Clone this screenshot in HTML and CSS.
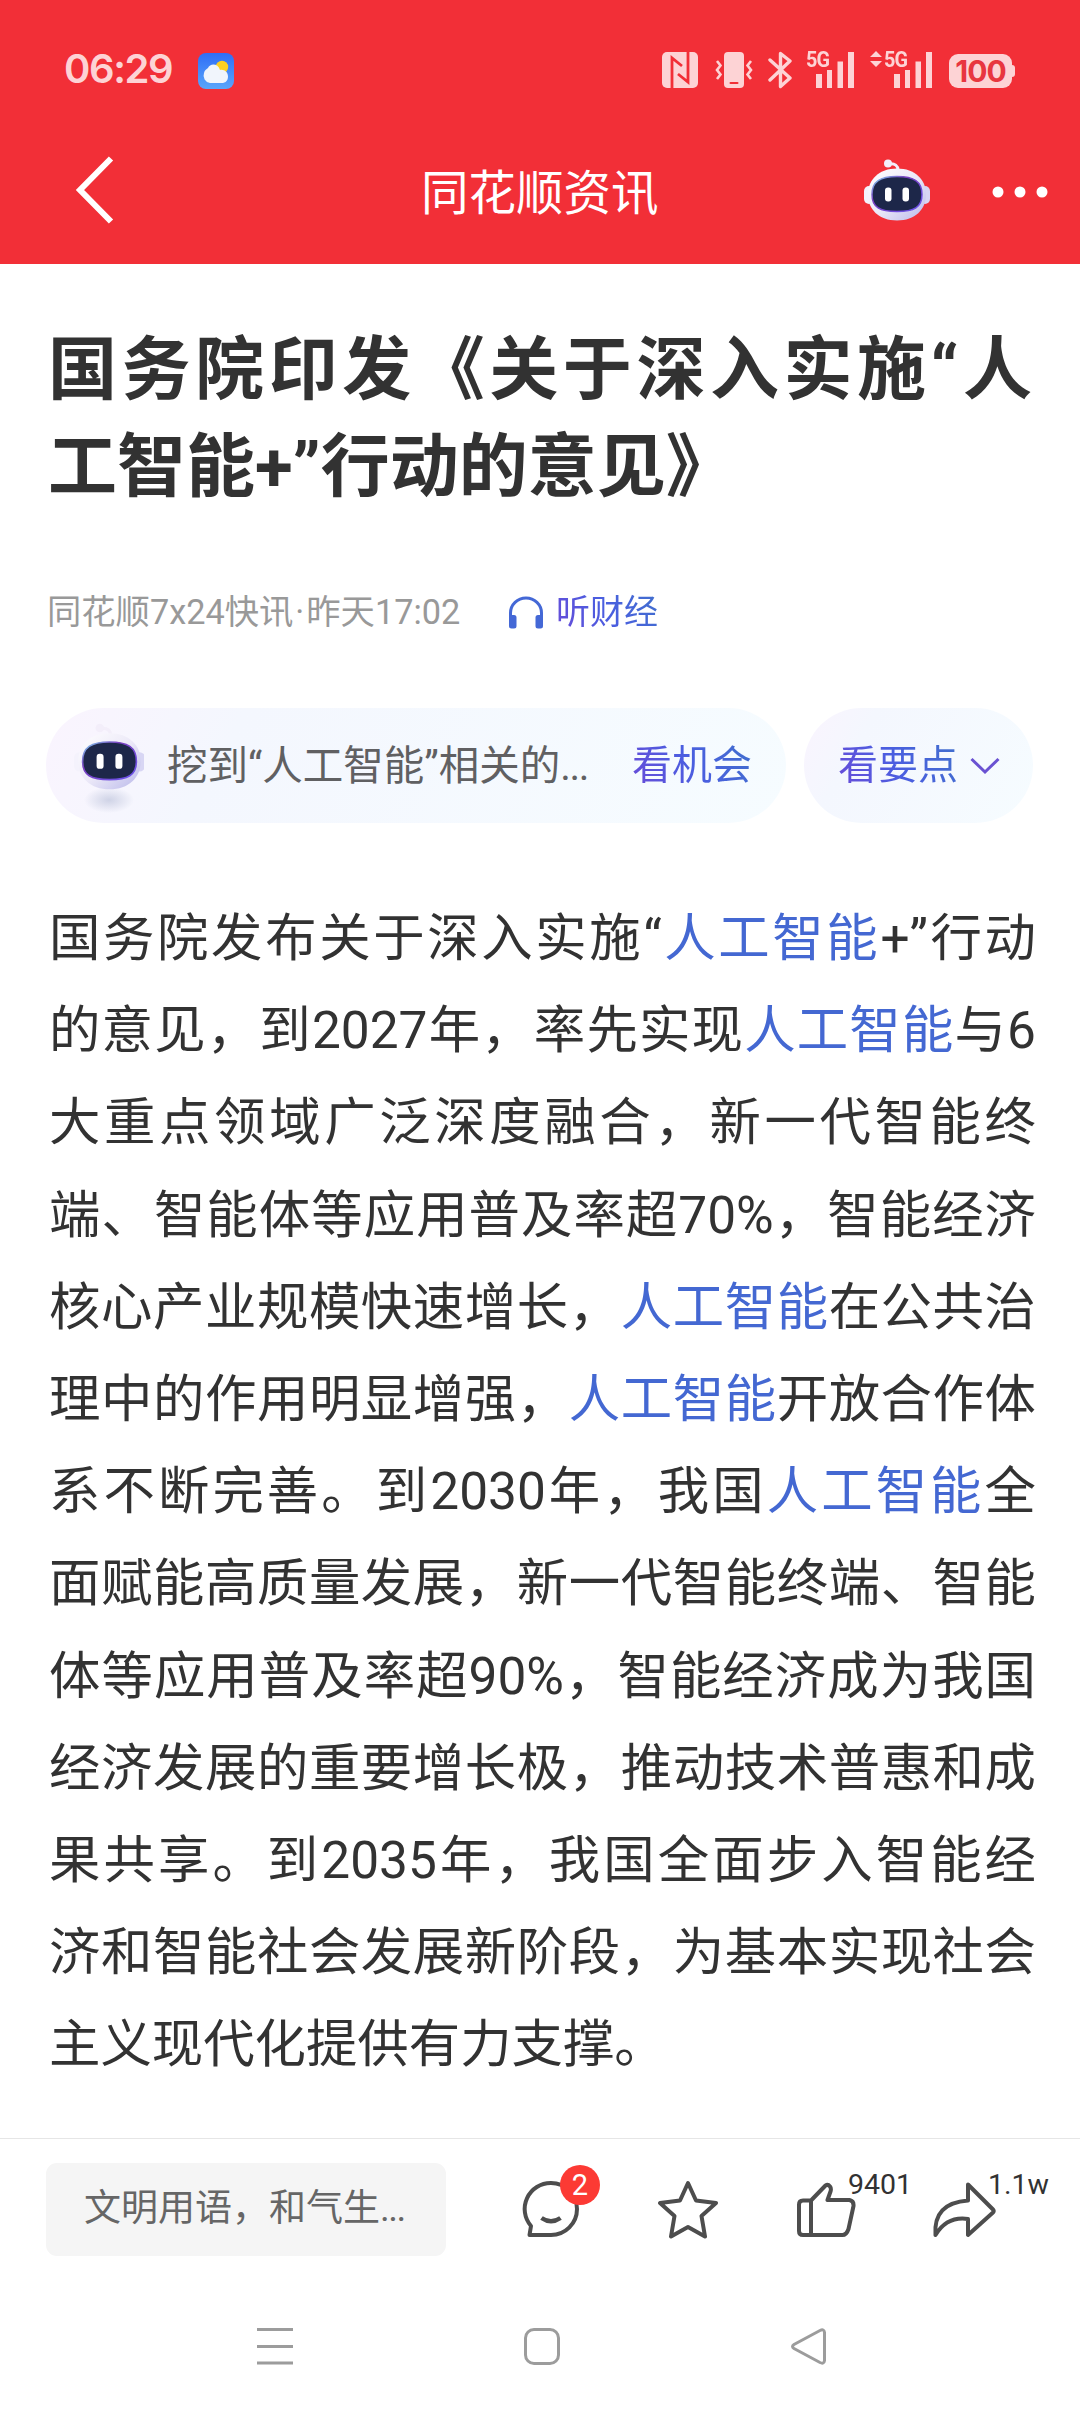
FILE: index.html
```html
<!DOCTYPE html>
<html lang="zh-CN">
<head>
  <meta charset="UTF-8" />
  <meta name="viewport" content="width=device-width, initial-scale=1" />
  <title>同花顺资讯</title>
  <link rel="stylesheet" href="styles.css">
</head>
<body>
  <!-- shared drawings -->
  <svg class="defs" width="0" height="0">
    <defs>
      <linearGradient id="shell" x1="0" y1="0" x2="1" y2="1">
        <stop offset="0" stop-color="#ffffff" />
        <stop offset="0.5" stop-color="#ece9f8" />
        <stop offset="1" stop-color="#b9b8ea" />
      </linearGradient>
      <linearGradient id="rim" x1="0" y1="0" x2="1" y2="1">
        <stop offset="0" stop-color="#7fd6f0" />
        <stop offset="0.35" stop-color="#7a3fc0" />
        <stop offset="1" stop-color="#6a55ee" />
      </linearGradient>
      <linearGradient id="sky" x1="0" y1="0" x2="0" y2="1">
        <stop offset="0" stop-color="#2f6df6" />
        <stop offset="1" stop-color="#5aa6fb" />
      </linearGradient>
      <radialGradient id="shade">
        <stop offset="0" stop-color="#cfd3e6" />
        <stop offset="1" stop-color="#cfd3e6" stop-opacity="0" />
      </radialGradient>
      <symbol id="robot" viewBox="0 0 66 62">
        <path d="M25 5c6-1 9 2 9 6" fill="none" stroke="#f3eefa" stroke-width="3" />
        <circle cx="24" cy="4.500" r="4" fill="#f3eefa" />
        <rect x="0" y="27" width="10" height="18" rx="5" fill="#f4f2fc" />
        <rect x="56" y="27" width="10" height="18" rx="5" fill="#d8d6f4" />
        <path d="M33 9.500c18 0 29 11 29 26S51 61.500 33 61.500 4 50.500 4 35.500s11-26 29-26z" fill="url(#shell)" />
        <path d="M33 17.500c17 0 25 5 25 18s-8 17-25 17-25-4-25-17 8-18 25-18z" fill="#1d2749" stroke="url(#rim)" stroke-width="1.500" />
        <rect x="21" y="28.500" width="6.500" height="14" rx="3" fill="#fff" />
        <rect x="38.500" y="28.500" width="6.500" height="14" rx="3" fill="#fff" />
      </symbol>
      <symbol id="bars" viewBox="0 0 38 36">
        <path d="M0 22h6v14H0zM11 18h5v18h-5zM21.500 9.500h5.500V36h-5.500zM32 0h6v36h-6z" />
      </symbol>
    </defs>
  </svg>

  <header>
    <div class="status-bar">
      <span class="clock">06:29</span>
      <svg class="weather" width="36" height="36" viewBox="0 0 36 36">
        <rect width="36" height="36" rx="8" fill="url(#sky)" />
        <circle cx="24" cy="14" r="6.200" fill="#fcd022" />
        <path d="M12 30a7.500 7.500 0 0 1-6-10c.5-3 3-4 4-5 2-5 10-5 12 2 4-1 8 2 8 6.500s-3 6.500-6 6.500z" fill="#f1f5fc" />
      </svg>
      <div class="status-icons">
        <svg class="nfc" width="36" height="36" viewBox="0 0 36 36">
          <rect width="36" height="36" rx="5" />
          <path d="M10 36V6l10 8M26 0v30L16 22" fill="none" stroke="#f22f37" stroke-width="2.800" />
        </svg>
        <svg class="vibrate" width="38" height="36" viewBox="0 0 38 36">
          <rect x="9" width="20" height="36" rx="4" />
          <path d="M15.500 31h7" stroke="#f22f37" stroke-width="2" stroke-linecap="round" />
          <path d="M2 9l3.500 4.500L2 18l3.500 4.500L2 27M36 9l-3.500 4.500L36 18l-3.500 4.500L36 27" fill="none" stroke="#fdd3d5" stroke-width="2.600" />
        </svg>
        <svg class="bluetooth" width="24" height="38" viewBox="0 0 24 38">
          <path d="M2 9l20 18-9.500 8.500v-33L22 10 2 29" fill="none" stroke="#fdd3d5" stroke-width="3.400" stroke-linejoin="round" stroke-linecap="round" />
        </svg>
        <div class="signal">
          <span class="net">5G</span>
          <svg width="38" height="36"><use href="#bars" /></svg>
        </div>
        <svg class="updown" width="12" height="16" viewBox="0 0 12 16"><path d="M6 0l6 6H0zM6 16l6-6H0z" /></svg>
        <div class="signal second">
          <span class="net">5G</span>
          <svg width="38" height="36"><use href="#bars" /></svg>
        </div>
        <div class="battery">100</div>
      </div>
    </div>
    <div class="nav-bar">
      <svg class="back" width="40" height="68" viewBox="0 0 40 68"><path d="M36 2.500L5 34l31 31.500" fill="none" stroke="#fff" stroke-width="6" /></svg>
      <h2>同花顺资讯</h2>
      <svg class="robot" width="66" height="62"><use href="#robot" /></svg>
      <svg class="more" width="56" height="12" viewBox="0 0 56 12"><circle cx="6" cy="6" r="5.500" /><circle cx="28" cy="6" r="5.500" /><circle cx="50" cy="6" r="5.500" /></svg>
    </div>
  </header>

  <main>
    <h1>
      <span class="full">国务院印发《关于深入实施“人</span>
      <span>工智能+”行动的意见》</span>
    </h1>

    <div class="meta">
      <span class="source">同花顺7x24快讯<i class="dot">·</i>昨天17:02</span>
      <svg width="36" height="33" viewBox="0 0 36 33">
        <path d="M2.500 24v-7a15.500 15 0 0 1 31 0v7" fill="none" stroke="#4468d6" stroke-width="3" />
        <path d="M1 19h5q2.500 0 2.500 2.500V30q0 2.500-2.500 2.500H3.500Q1 32.500 1 30zM35 19h-5q-2.500 0-2.500 2.500V30q0 2.500 2.500 2.500h2.500q2.500 0 2.500-2.500z" fill="#4468d6" />
      </svg>
      <span class="listen">听财经</span>
    </div>

    <div class="ai-row">
      <div class="pill chance">
        <svg class="bot" width="70" height="96" viewBox="0 0 70 96">
          <ellipse cx="35" cy="82" rx="25" ry="13" fill="url(#shade)" />
          <use href="#robot" x="0" y="5" width="71" height="67" />
        </svg>
        <span class="hint">挖到“人工智能”相关的<i class="ell">...</i></span>
        <span class="link">看机会</span>
      </div>
      <div class="pill points">
        <span class="link">看要点</span>
        <svg width="30" height="18" viewBox="0 0 30 18"><path d="M1.500 2L15 15 28.500 2" fill="none" stroke="#6a52d2" stroke-width="3" /></svg>
      </div>
    </div>

    <article>
      <span class="full">国务院发布关于深入实施“<a>人工智能</a>+”行动</span>
      <span class="full">的意见，到2027年，率先实现<a>人工智能</a>与6</span>
      <span class="full">大重点领域广泛深度融合，新一代智能终</span>
      <span class="full">端、智能体等应用普及率超70%，智能经济</span>
      <span class="full">核心产业规模快速增长，<a>人工智能</a>在公共治</span>
      <span class="full">理中的作用明显增强，<a>人工智能</a>开放合作体</span>
      <span class="full">系不断完善。到2030年，我国<a>人工智能</a>全</span>
      <span class="full">面赋能高质量发展，新一代智能终端、智能</span>
      <span class="full">体等应用普及率超90%，智能经济成为我国</span>
      <span class="full">经济发展的重要增长极，推动技术普惠和成</span>
      <span class="full">果共享。到2035年，我国全面步入智能经</span>
      <span class="full">济和智能社会发展新阶段，为基本实现社会</span>
      <span>主义现代化提供有力支撑。</span>
    </article>
  </main>

  <footer>
    <div class="actions">
      <div class="comment-input">文明用语，和气生<i class="ell">...</i></div>
      <div class="action comment">
        <svg width="60" height="60" viewBox="0 0 60 60">
          <path d="M30 4a26 26 0 0 1 0 52H8.500l1.500-9A26 26 0 0 1 30 4z" />
          <path d="M20.500 39q9.500 6.500 19 0" stroke-width="4.500" />
        </svg>
        <span class="badge">2</span>
      </div>
      <div class="action star">
        <svg width="60" height="60" viewBox="0 0 60 60"><path d="M30 4l8 17.500 20 2.500-14.500 13L47 57.500 30 48 13 57.500 16.500 37 2 24l20-2.500z" /></svg>
      </div>
      <div class="action like">
        <svg width="60" height="60" viewBox="0 0 60 60">
          <path d="M15 21.500L29.500 6.500Q32 5 34 7.500q1.500 2 .5 5l-3 8.500h22q4.500 1 4 6l-5 23q-2 6-6 6H7q-4 0-4-4V25.500q0-4 4-4z" />
          <path d="M15 21.500V56" />
        </svg>
        <span class="count">9401</span>
      </div>
      <div class="action share">
        <svg width="64" height="60" viewBox="0 0 64 60"><path d="M36 5.500l25 25q1.500 1.500 0 3L36 56V40Q15 37 3.500 56 1 24 36 21.500z" /></svg>
        <span class="count">1.1w</span>
      </div>
    </div>
    <div class="sys-nav">
      <svg width="36" height="37" viewBox="0 0 36 37"><path d="M0 1.500h36M0 18.500h36M0 35h36" /></svg>
      <svg width="36" height="37" viewBox="0 0 36 37"><rect x="1.500" y="1.500" width="33" height="34" rx="8.500" /></svg>
      <svg width="36" height="37" viewBox="0 0 36 37"><path d="M29 2.500q4-2 4.500 2v28q-.5 4-4.500 2L3 20.500q-3-2 0-4z" /></svg>
    </div>
  </footer>
</body>
</html>
```

FILE: styles.css
```css
* {
  box-sizing: border-box;
}
body {
  font-family: Roboto, "Noto Sans CJK SC", sans-serif;
  margin: 0;
  background: #fff;
  color: #323232;
  display: flex;
  flex-direction: column;
  height: 2412px;
  text-spacing-trim: space-all;
}
svg {
  display: block;
  flex-shrink: 0;
}
i {
  font-style: normal;
}
.defs {
  position: absolute;
}
header {
  height: 264px;
  background: #f22f37;
  color: #fff;
}

/* status bar */
.status-bar {
  display: flex;
  align-items: center;
  height: 120px;
  padding: 21px 65px 0 64px;
}
.clock {
  font-family: Inter, sans-serif;
  font-size: 40px;
  font-weight: 600;
  line-height: 36px;
  letter-spacing: -1.400px;
  width: 134px;
  margin-top: -4px;
  color: #fdd3d5;
}
.status-icons {
  display: flex;
  align-items: center;
  margin: -2px 0 0 auto;
  fill: #fdd3d5;
}
.vibrate {
  margin-left: 17px;
}
.bluetooth {
  margin-left: 15px;
}
.signal {
  position: relative;
  margin-left: 24px;
}
.net {
  position: absolute;
  left: -10px;
  top: -2px;
  font-size: 22px;
  font-weight: 700;
  line-height: 20px;
  letter-spacing: -1px;
  transform: scaleX(0.9);
  transform-origin: left;
  color: #fdd3d5;
}
.updown {
  margin: -22px 0 0 16px;
}
.signal.second {
  margin-left: 12px;
}
.battery {
  position: relative;
  width: 63px;
  height: 34px;
  margin: 2px 3px 0 17px;
  border-radius: 9px;
  background: #fdd3d5;
  color: #e8363f;
  font-family: Inter, sans-serif;
  font-size: 30px;
  font-weight: 700;
  line-height: 34px;
  letter-spacing: -1px;
  text-align: center;
}
.battery::after {
  content: "";
  position: absolute;
  right: -3px;
  top: 11px;
  width: 4px;
  height: 12px;
  border-radius: 0 3px 3px 0;
  background: #fdd3d5;
}

/* title bar */
.nav-bar {
  display: flex;
  align-items: center;
  height: 140px;
  padding: 0 32px 0 75px;
}
.back {
  margin-top: -1px;
}
.nav-bar h2 {
  width: 238px;
  margin: 7px 0 0 306px;
  font-size: 47.500px;
  font-weight: 400;
  line-height: 60px;
  white-space: nowrap;
}
.nav-bar .robot {
  margin-left: 205px;
}
.more {
  margin: 4px 0 0 62px;
  fill: #fff;
}

/* article */
main {
  flex: 1;
  padding: 59px 44px 0 48px;
}
h1 {
  margin: 0;
  width: 984px;
  font-size: 69px;
  font-weight: 700;
  line-height: 96.500px;
}
h1 span,
article span {
  display: block;
  white-space: nowrap;
}
.full {
  text-align: justify;
  text-align-last: justify;
}
.meta {
  display: flex;
  align-items: center;
  height: 50px;
  margin-top: 71px;
  font-size: 34.300px;
  line-height: 50px;
}
.source {
  width: 461px;
  margin-left: -1px;
  color: #999;
}
.dot {
  margin: 0 2px;
}
.listen {
  margin-left: 12px;
  font-size: 34px;
}
.listen,
.link {
  background: linear-gradient(60deg, #6a4bd8, #4a5ee0 50%, #4070cc);
  -webkit-background-clip: text;
  background-clip: text;
  color: transparent;
}
.ai-row {
  display: flex;
  gap: 18px;
  margin: 71px 0 0 -2px;
}
.pill {
  display: flex;
  align-items: center;
  height: 115px;
  border-radius: 58px;
  font-size: 40px;
  line-height: 56px;
  background: linear-gradient(120deg, #faf4fe, #f4f7fe 25%, #f6fcff);
}
.chance {
  width: 740px;
  padding-left: 28px;
}
.hint {
  width: 465px;
  margin-left: 23px;
  font-size: 40.500px;
  color: #606062;
}
.ell {
  letter-spacing: -1.500px;
}
.points {
  width: 229px;
  padding-left: 34px;
}
.points svg {
  margin-left: 12px;
}
article {
  margin: 70px 0 0 1px;
  font-size: 51.400px;
  line-height: 92.200px;
}
article a {
  color: #4468d2;
}

/* bottom bar */
footer {
  height: 274px;
}
.actions {
  display: flex;
  align-items: flex-start;
  height: 142px;
  padding: 24px 0 0 46px;
  border-top: 1px solid #e6e6e6;
}
.comment-input {
  width: 400px;
  height: 93px;
  padding-left: 38px;
  border-radius: 11px;
  background: #f5f5f5;
  color: #666;
  font-size: 37px;
  line-height: 92px;
}
.action {
  position: relative;
  margin-top: 16px;
  fill: none;
  stroke: #4d4d4d;
  stroke-width: 4;
  stroke-linejoin: round;
}
.comment {
  margin-left: 75px;
}
.star {
  margin-left: 77px;
}
.like {
  margin-left: 78px;
}
.share {
  margin-left: 76px;
}
.badge {
  position: absolute;
  left: 39px;
  top: -14px;
  width: 40px;
  height: 40px;
  border-radius: 50%;
  background: #fc3a34;
  color: #fff;
  font-size: 29px;
  line-height: 40px;
  text-align: center;
}
.count {
  position: absolute;
  left: 52px;
  top: -12px;
  font-size: 28.500px;
  line-height: 35px;
}
.share .count {
  left: 56px;
}
.sys-nav {
  display: flex;
  gap: 231px;
  padding: 48px 0 0 257px;
  fill: none;
  stroke: #9c9c9c;
  stroke-width: 3;
}
```
